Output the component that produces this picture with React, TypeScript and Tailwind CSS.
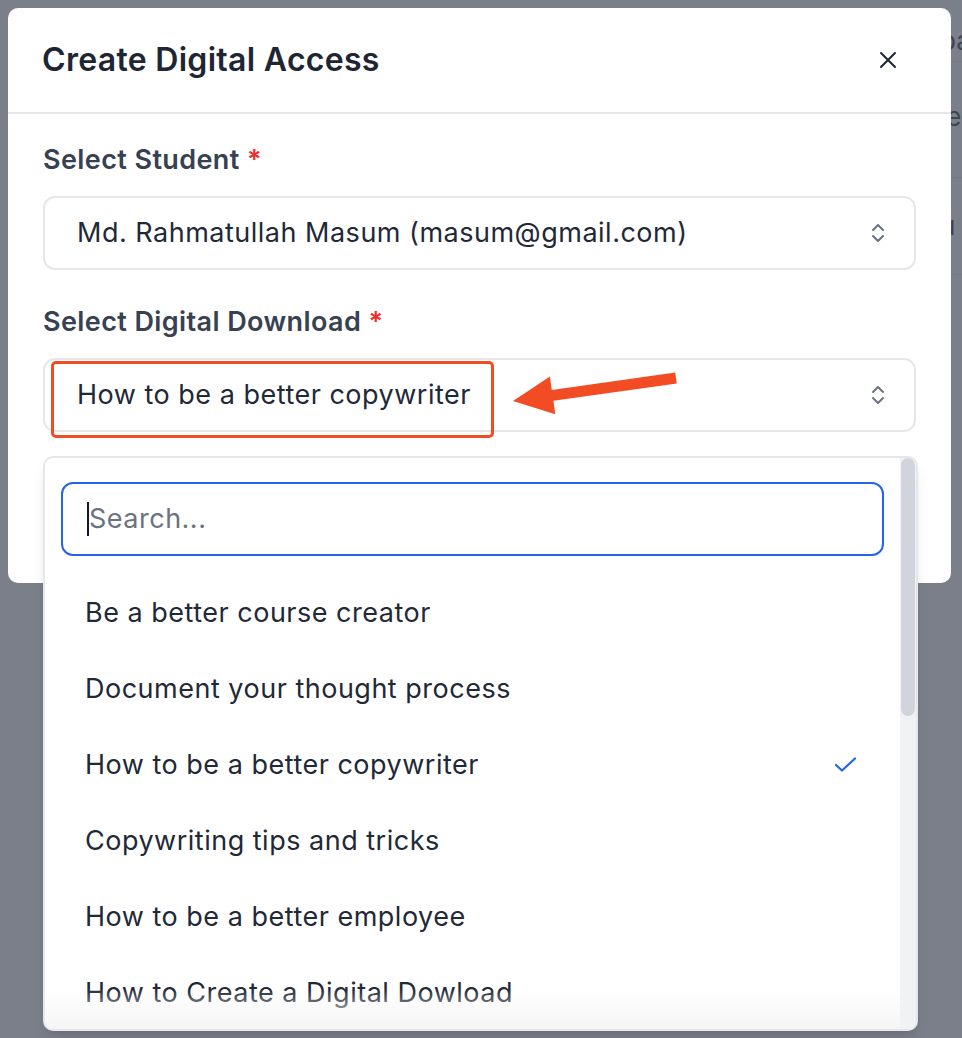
import React from "react";

const options = [
  "Be a better course creator",
  "Document your thought process",
  "How to be a better copywriter",
  "Copywriting tips and tricks",
  "How to be a better employee",
  "How to Create a Digital Dowload",
];

function ChevronUpDown() {
  return (
    <svg width="16" height="24" viewBox="0 0 16 24" fill="none" stroke="#6b7280" strokeWidth="2" strokeLinecap="round" strokeLinejoin="round">
      <path d="M3 9 L8 4 L13 9" />
      <path d="M3 15 L8 20 L13 15" />
    </svg>
  );
}

export default function App() {
  return (
    <div className="relative h-[1038px] w-[962px] overflow-hidden bg-[#7a7f8a] font-['Inter',sans-serif]">
      {/* background page glimpses */}
      <div className="flex flex-col pl-[940px] text-[26px] text-[#3f4450]">
        <div className="h-[62px] border-b border-[#737884] pt-[26px] leading-[30px]">pa</div>
        <div className="h-[116px] border-b border-[#737884] pt-[40px] leading-[30px]">le</div>
        <div className="h-[97px] border-b border-[#737884] pt-[33px] leading-[30px]">u</div>
      </div>

      {/* modal */}
      <div className="absolute left-[8px] top-[8px] flex h-[575px] w-[943px] flex-col rounded-[10px] bg-white">
        <div className="flex h-[106px] items-center justify-between border-b-2 border-[#e5e7eb] pl-[34px] pr-[51px]">
          <h2 className="text-[32px] font-semibold tracking-[0.3px] text-[#1e2533]">Create Digital Access</h2>
          <svg width="24" height="24" viewBox="0 0 24 24" fill="none" stroke="#1e2533" strokeWidth="2" strokeLinecap="round">
            <path d="M5 5 L19 19 M19 5 L5 19" />
          </svg>
        </div>
        <div className="flex flex-col px-[35px] pt-[30px]">
          <label className="text-[27px] font-semibold leading-[32px] tracking-[0.4px] text-[#374151]">
            Select Student <span className="text-[#ef2b2b]">*</span>
          </label>
          <div className="mt-[20px] flex h-[74px] items-center justify-between rounded-[12px] border-2 border-[#e5e7eb] pl-[32px] pr-[28px]">
            <span className="text-[27px] tracking-[0.5px] text-[#1f2937]">Md. Rahmatullah Masum (masum@gmail.com)</span>
            <ChevronUpDown />
          </div>
          <label className="mt-[36px] text-[27px] font-semibold leading-[32px] tracking-[0.4px] text-[#374151]">
            Select Digital Download <span className="text-[#ef2b2b]">*</span>
          </label>
          <div className="mt-[20px] flex h-[74px] items-center justify-between rounded-[12px] border-2 border-[#e5e7eb] pl-[32px] pr-[28px]">
            <span className="text-[27px] tracking-[0.5px] text-[#1f2937]">How to be a better copywriter</span>
            <ChevronUpDown />
          </div>
        </div>
      </div>

      {/* annotation box */}
      <div className="absolute left-[51px] top-[361px] h-[77px] w-[443px] rounded-[5px] border-[3px] border-[#f14c24]" />
      {/* annotation arrow */}
      <svg className="absolute left-0 top-0" width="962" height="1038" viewBox="0 0 962 1038">
        <polygon
          points="513,401 549.9,376.6 551.8,390 675.2,372.6 676.8,383.4 553.4,400.8 555.3,414.2"
          fill="#f14c24"
        />
      </svg>

      {/* dropdown */}
      <div className="absolute left-[43px] top-[456px] flex h-[575px] w-[875px] overflow-hidden rounded-[10px] border-2 border-[#e5e7eb] bg-white shadow-lg">
        <div className="flex flex-1 flex-col">
          <div className="pl-[16px] pr-[16px] pt-[24px]">
            <div className="flex h-[74px] items-center rounded-[12px] border-2 border-[#2563eb] pl-[24px]">
              <span className="h-[34px] w-[2px] bg-[#111827]" />
              <span className="text-[27px] tracking-[0.5px] text-[#6b7280]">Search...</span>
            </div>
          </div>
          <div className="mt-[19px] flex flex-col">
            {options.map((o, i) => (
              <div key={o} className="flex h-[76px] items-center justify-between pl-[40px] pr-[42px]">
                <span className="text-[27px] tracking-[0.5px] text-[#1f2937]">{o}</span>
                {i === 2 && (
                  <svg width="24" height="24" viewBox="0 0 24 24" fill="none" stroke="#2563eb" strokeWidth="2.2" strokeLinecap="round" strokeLinejoin="round">
                    <path d="M2 12 L8 17.5 L21 5.5" />
                  </svg>
                )}
              </div>
            ))}
          </div>
        </div>
        {/* scrollbar */}
        <div className="flex w-[16px] flex-col bg-[#f1f2f4] px-[1px]">
          <div className="h-[258px] rounded-full bg-[#d1d5db]" />
        </div>
        <div className="pointer-events-none absolute bottom-0 left-0 right-[16px] h-[40px] bg-gradient-to-b from-white/0 to-[#f5f5f5]" />
      </div>
    </div>
  );
}
